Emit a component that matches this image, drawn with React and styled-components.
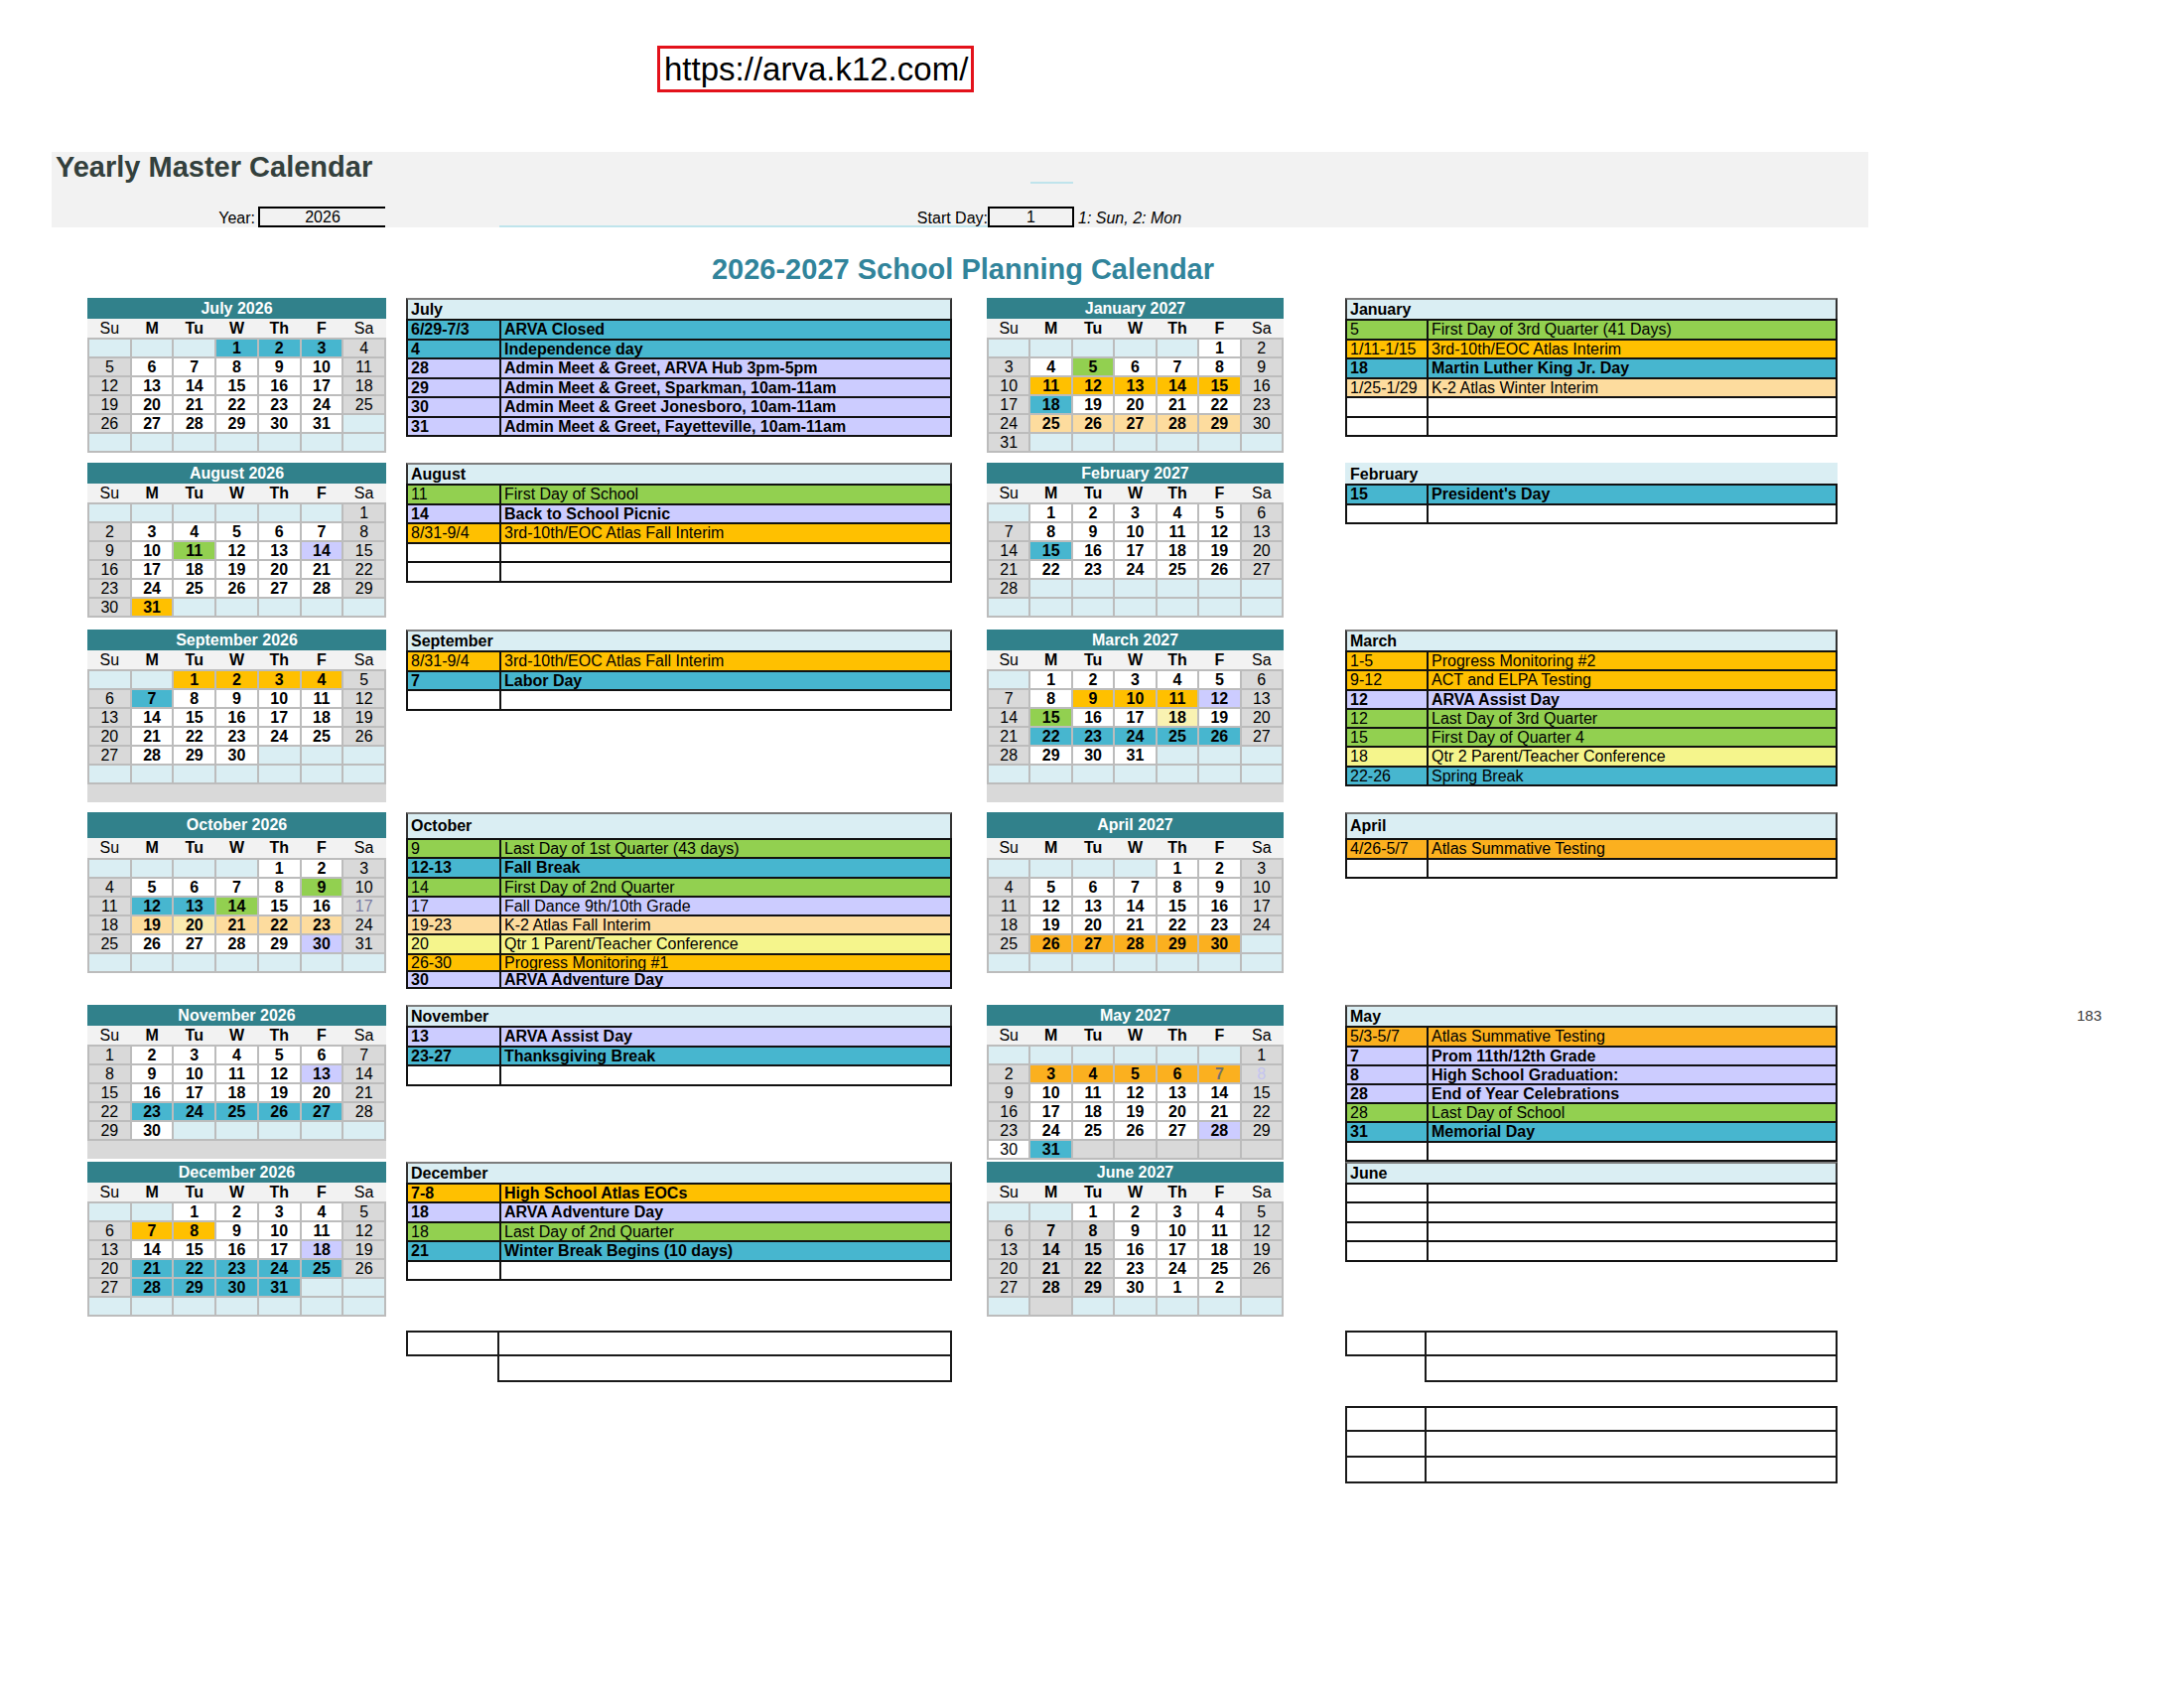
import React from "react";
import styled, { createGlobalStyle } from "styled-components";

const COLORS = {
  cyan: "#47b6cf",
  lav: "#ccccff",
  green: "#92d050",
  orange: "#ffc000",
  amber: "#fbb01f",
  peach: "#fddc9e",
  cream: "#faeab0",
  lemon: "#f9f2b2",
  yellow: "#f5f58c",
  empty: "#daeef3",
  weekend: "#d9d9d9",
  white: "#ffffff",
};

const GlobalStyle = createGlobalStyle`
  * { box-sizing: border-box; }
  body {
    margin: 0;
    background: #ffffff;
    color: #000;
    font-family: "Liberation Sans", Arial, sans-serif;
  }
`;

const Page = styled.div`
  width: 2200px;
  min-height: 1700px;
  padding-top: 46px;
`;

const UrlBox = styled.div`
  margin-left: 662px;
  width: 319px;
  height: 47px;
  border: 3px solid #e3121b;
  padding-left: 4px;
  font-size: 33px;
  line-height: 42px;
  white-space: nowrap;
  overflow: hidden;
`;

const Band = styled.div`
  margin-top: 60px;
  margin-left: 52px;
  width: 1830px;
  height: 76px;
  background: #f2f2f2;
`;

const BandTitle = styled.div`
  padding-left: 4px;
  font-size: 29px;
  line-height: 30px;
  font-weight: bold;
  color: #33403c;
  white-space: nowrap;
`;

const Dash = styled.div`
  margin: 0 0 0 986px;
  width: 43px;
  height: 2px;
  background: #bfe4ec;
`;

const FieldRow = styled.div`
  display: flex;
  margin-top: 23px;
  height: 21px;
  font-size: 16px;
  line-height: 20px;
`;

const FieldLabel = styled.div`
  width: 205px;
  padding-top: 2px;
  text-align: right;
`;

const YearBox = styled.div`
  margin-left: 3px;
  width: 128px;
  border-top: 2px solid #000;
  border-left: 2px solid #000;
  border-bottom: 2px solid #000;
  text-align: center;
  line-height: 18px;
`;

const Underlined = styled.div`
  margin-left: 115px;
  width: 492px;
  padding-top: 2px;
  border-bottom: 2px solid #bfe4ec;
  text-align: right;
`;

const StartBox = styled.div`
  width: 87px;
  border: 2px solid #000;
  text-align: center;
  line-height: 18px;
`;

const Note = styled.div`
  margin-left: 4px;
  padding-top: 2px;
  font-style: italic;
`;

const PlanTitle = styled.h1`
  margin: 26px 0 0;
  width: 1940px;
  text-align: center;
  font-size: 29px;
  line-height: 32px;
  font-weight: bold;
  color: #31849b;
`;

const Sheet = styled.div`
  margin-top: 13px;
  padding-left: 88px;
`;

const Block = styled.div`
  display: flex;
  align-items: flex-start;
  margin-top: ${(p) => p.$gap}px;
`;

const Slot = styled.div`
  flex: none;
  width: ${(p) => p.$w}px;
  margin-left: ${(p) => p.$ml || 0}px;
`;

/* mini calendar */

const CalHead = styled.div`
  height: ${(p) => p.$h}px;
  background: #31818b;
  color: #fff;
  font-size: 16px;
  font-weight: bold;
  text-align: center;
  line-height: ${(p) => p.$h}px;
`;

const DowRow = styled.div`
  display: grid;
  grid-template-columns: repeat(7, 1fr);
  height: ${(p) => p.$h}px;
  padding: 0 2px;
  column-gap: 2px;
  background: #f2f2f2;
`;

const Dow = styled.div`
  text-align: center;
  font-size: 16px;
  line-height: ${(p) => p.$h}px;
  font-weight: ${(p) => (p.$weekend ? 400 : 700)};
`;

const WeekGrid = styled.div`
  display: grid;
  grid-template-columns: repeat(7, 1fr);
  grid-auto-rows: 17px;
  gap: 2px;
  background: #bcbcbc;
  border: 2px solid #bcbcbc;
`;

const Day = styled.div`
  background: ${(p) => p.$bg};
  color: ${(p) => p.$fg};
  font-weight: ${(p) => (p.$bold ? 700 : 400)};
  font-size: 16px;
  line-height: 18px;
  text-align: center;
  overflow: hidden;
`;

const GrayBand = styled.div`
  height: 18px;
  background: #d9d9d9;
`;

/* events list */

const EventHead = styled.div`
  height: ${(p) => p.$h}px;
  background: ${COLORS.empty};
  border: 2px solid ${(p) => (p.$plain ? "transparent" : "#333")};
  border-top-color: ${(p) => (p.$plain ? "transparent" : "#7c7c7c")};
  border-bottom: 0;
  padding-left: 3px;
  font-size: 16px;
  font-weight: bold;
  line-height: ${(p) => p.$h - 2}px;
`;

const EventBody = styled.div`
  border: 2px solid #111;
  border-top: 0;
`;

const EventRow = styled.div`
  display: flex;
  height: ${(p) => p.$h}px;
  border-top: 2px solid #111;
  background: ${(p) => p.$bg};
  font-size: 16px;
  line-height: ${(p) => p.$h - 2}px;
  font-weight: ${(p) => (p.$bold ? 700 : 400)};
  white-space: nowrap;
  overflow: hidden;
`;

const DateCell = styled.div`
  flex: none;
  width: ${(p) => p.$w}px;
  border-right: 2px solid #111;
  padding-left: 3px;
  overflow: hidden;
`;

const DescCell = styled.div`
  flex: 1;
  padding-left: 3px;
  overflow: hidden;
`;

const FootTable = styled.div`
  margin-top: ${(p) => p.$mt || 0}px;
`;

const FootRow = styled.div`
  display: flex;
  height: 26px;
`;

const FootCell = styled.div`
  flex: ${(p) => (p.$w ? "none" : 1)};
  width: ${(p) => (p.$w ? `${p.$w}px` : "auto")};
  border-top: ${(p) => (p.$first ? "2px solid #1a1a1a" : "0")};
  border-bottom: 2px solid #1a1a1a;
  border-right: 2px solid #1a1a1a;
  border-left: ${(p) => (p.$left ? "2px solid #1a1a1a" : "0")};
`;

const FootGap = styled.div`
  flex: none;
  width: ${(p) => p.$w}px;
`;

const PageNum = styled.div`
  flex: none;
  margin: 3px 0 0 241px;
  font-size: 15px;
  line-height: 15px;
  color: #3a3a3a;
`;

const range = (a, b, color) => {
  const out = {};
  for (let d = a; d <= b; d++) out[d] = color;
  return out;
};

const LEFT_CALS = [
  { title: "July 2026", offset: 3, days: 31, hl: range(1, 3, "cyan") },
  { title: "August 2026", offset: 6, days: 31, hl: { 11: "green", 14: "lav", 31: "orange" } },
  { title: "September 2026", offset: 2, days: 30, band: true, hl: { ...range(1, 4, "orange"), 7: "cyan" } },
  {
    title: "October 2026",
    offset: 4,
    days: 31,
    hl: { 9: "green", 12: "cyan", 13: "cyan", 14: "green", 19: "peach", 20: "cream", 21: "peach", 22: "peach", 23: "peach", 30: "lav" },
    fg: { 17: "#7a7aa0" },
  },
  { title: "November 2026", offset: 0, days: 30, rows: 5, band: true, hl: { 13: "lav", ...range(23, 27, "cyan") } },
  {
    title: "December 2026",
    offset: 2,
    days: 31,
    hl: { 7: "orange", 8: "orange", 18: "lav", ...range(21, 25, "cyan"), ...range(28, 31, "cyan") },
  },
];

const RIGHT_CALS = [
  {
    title: "January 2027",
    offset: 5,
    days: 31,
    hl: { 5: "green", ...range(11, 15, "orange"), 18: "cyan", ...range(25, 29, "peach") },
  },
  { title: "February 2027", offset: 1, days: 28, hl: { 15: "cyan" } },
  {
    title: "March 2027",
    offset: 1,
    days: 31,
    band: true,
    hl: { ...range(9, 11, "orange"), 12: "lav", 15: "green", 18: "lemon", ...range(22, 26, "cyan") },
  },
  { title: "April 2027", offset: 4, days: 30, hl: range(26, 30, "amber") },
  {
    title: "May 2027",
    offset: 6,
    days: 31,
    trailGray: true,
    hl: { ...range(3, 7, "amber"), 28: "lav", 30: "white", 31: "cyan" },
    fg: { 7: "#707070", 8: "#c4c4f0" },
  },
  {
    title: "June 2027",
    offset: 2,
    days: 30,
    next: 2,
    trailGray: true,
    grayCells: [36],
    hl: { 7: "weekend", 8: "weekend", 14: "weekend", 15: "weekend", 21: "weekend", 22: "weekend", 28: "weekend", 29: "weekend" },
  },
];

const ev = (d, t, c, b = false, h) => ({ d, t, c, b, h });

const LEFT_EVENTS = [
  {
    name: "July",
    rows: [
      ev("6/29-7/3", "ARVA Closed", "cyan", true),
      ev("4", "Independence day", "cyan", true),
      ev("28", "Admin Meet & Greet, ARVA Hub 3pm-5pm", "lav", true),
      ev("29", "Admin Meet & Greet, Sparkman, 10am-11am", "lav", true),
      ev("30", "Admin Meet & Greet Jonesboro, 10am-11am", "lav", true),
      ev("31", "Admin Meet & Greet, Fayetteville, 10am-11am", "lav", true),
    ],
  },
  {
    name: "August",
    blank: 2,
    rows: [
      ev("11", "First Day of School", "green"),
      ev("14", "Back to School Picnic", "lav", true),
      ev("8/31-9/4", "3rd-10th/EOC Atlas Fall Interim", "orange"),
    ],
  },
  {
    name: "September",
    blank: 1,
    rows: [ev("8/31-9/4", "3rd-10th/EOC Atlas Fall Interim", "orange"), ev("7", "Labor Day", "cyan", true)],
  },
  {
    name: "October",
    rowH: 19.3,
    rows: [
      ev("9", "Last Day of 1st Quarter (43 days)", "green"),
      ev("12-13", "Fall Break", "cyan", true),
      ev("14", "First Day of 2nd Quarter", "green"),
      ev("17", "Fall Dance 9th/10th Grade", "lav"),
      ev("19-23", "K-2 Atlas Fall Interim", "peach"),
      ev("20", "Qtr 1 Parent/Teacher Conference", "yellow"),
      ev("26-30", "Progress Monitoring #1", "orange", false, 17.3),
      ev("30", "ARVA Adventure Day", "lav", true, 17.3),
    ],
  },
  {
    name: "November",
    blank: 1,
    rows: [ev("13", "ARVA Assist Day", "lav", true), ev("23-27", "Thanksgiving Break", "cyan", true)],
  },
  {
    name: "December",
    blank: 1,
    rows: [
      ev("7-8", "High School Atlas EOCs", "orange", true),
      ev("18", "ARVA Adventure Day", "lav", true),
      ev("18", "Last Day of 2nd Quarter", "green"),
      ev("21", "Winter Break Begins (10 days)", "cyan", true),
    ],
  },
];

const RIGHT_EVENTS = [
  {
    name: "January",
    blank: 2,
    rows: [
      ev("5", "First Day of 3rd Quarter (41 Days)", "green"),
      ev("1/11-1/15", "3rd-10th/EOC Atlas Interim", "orange"),
      ev("18", "Martin Luther King Jr. Day", "cyan", true),
      ev("1/25-1/29", "K-2 Atlas Winter Interim", "peach"),
    ],
  },
  { name: "February", plain: true, blank: 1, rows: [ev("15", "President's Day", "cyan", true)] },
  {
    name: "March",
    rowH: 19.3,
    rows: [
      ev("1-5", "Progress Monitoring #2", "orange"),
      ev("9-12", "ACT and ELPA Testing", "orange"),
      ev("12", "ARVA Assist Day", "lav", true),
      ev("12", "Last Day of 3rd Quarter", "green"),
      ev("15", "First Day of Quarter 4", "green"),
      ev("18", "Qtr 2 Parent/Teacher Conference", "yellow"),
      ev("22-26", "Spring Break", "cyan"),
    ],
  },
  { name: "April", blank: 1, rows: [ev("4/26-5/7", "Atlas Summative Testing", "amber")] },
  {
    name: "May",
    blank: 1,
    rowH: 19.2,
    rows: [
      ev("5/3-5/7", "Atlas Summative Testing", "amber"),
      ev("7", "Prom 11th/12th Grade", "lav", true),
      ev("8", "High School Graduation:", "lav", true),
      ev("28", "End of Year Celebrations", "lav", true),
      ev("28", "Last Day of School", "green"),
      ev("31", "Memorial Day", "cyan", true),
    ],
  },
  { name: "June", blank: 4, rows: [] },
];

const DOW = ["Su", "M", "Tu", "W", "Th", "F", "Sa"];

function buildCells(m) {
  const rows = m.rows || 6;
  const lastRow = Math.floor((m.offset + m.days - 1) / 7);
  const cells = [];
  for (let i = 0; i < rows * 7; i++) {
    const col = i % 7;
    const row = Math.floor(i / 7);
    const day = i - m.offset + 1;
    const weekend = col === 0 || col === 6;
    const cell = { text: "", bg: COLORS.empty, fg: "#000", bold: false };
    if (day >= 1 && day <= m.days) {
      cell.text = day;
      cell.bold = !weekend;
      cell.bg = weekend ? COLORS.weekend : COLORS.white;
      if (m.hl && m.hl[day]) cell.bg = COLORS[m.hl[day]];
      if (m.fg && m.fg[day]) cell.fg = m.fg[day];
    } else if (day > m.days) {
      const extra = day - m.days;
      if (m.next && extra <= m.next) {
        cell.text = extra;
        cell.bold = !weekend;
        cell.bg = weekend ? COLORS.weekend : COLORS.white;
      } else if (m.trailGray && row === lastRow) {
        cell.bg = COLORS.weekend;
      }
    }
    if (m.grayCells && m.grayCells.includes(i)) cell.bg = COLORS.weekend;
    cells.push(cell);
  }
  return cells;
}

const MiniCal = ({ month, tall }) => (
  <div>
    <CalHead $h={tall ? 26 : 21}>{month.title}</CalHead>
    <DowRow $h={tall ? 20 : 19}>
      {DOW.map((d, i) => (
        <Dow key={d} $h={tall ? 20 : 19} $weekend={i === 0 || i === 6}>
          {d}
        </Dow>
      ))}
    </DowRow>
    <WeekGrid>
      {buildCells(month).map((c, i) => (
        <Day key={i} $bg={c.bg} $fg={c.fg} $bold={c.bold}>
          {c.text}
        </Day>
      ))}
    </WeekGrid>
    {month.band && <GrayBand />}
  </div>
);

const EventList = ({ list, dateW, tall }) => {
  const h = list.rowH || 19.5;
  const blanks = Array.from({ length: list.blank || 0 });
  return (
    <div>
      <EventHead $h={tall ? 26 : 21} $plain={list.plain}>
        {list.name}
      </EventHead>
      <EventBody>
        {list.rows.map((r, i) => (
          <EventRow key={i} $h={r.h || h} $bg={COLORS[r.c]} $bold={r.b}>
            <DateCell $w={dateW}>{r.d}</DateCell>
            <DescCell>{r.t}</DescCell>
          </EventRow>
        ))}
        {blanks.map((_, i) => (
          <EventRow key={`b${i}`} $h={h} $bg="#fff">
            <DateCell $w={dateW} />
            <DescCell />
          </EventRow>
        ))}
      </EventBody>
    </div>
  );
};

const NotesTable = ({ dateW, rows, openLast, mt }) => (
  <FootTable $mt={mt}>
    {Array.from({ length: rows }).map((_, i) =>
      openLast && i === rows - 1 ? (
        <FootRow key={i}>
          <FootGap $w={dateW} />
          <FootCell $left />
        </FootRow>
      ) : (
        <FootRow key={i}>
          <FootCell $w={dateW + 2} $left $first={i === 0} />
          <FootCell $first={i === 0} />
        </FootRow>
      )
    )}
  </FootTable>
);

const GAPS = [0, 10, 12, 10, 16, 0];

const COLS = {
  leftCal: { w: 301, ml: 0 },
  leftEv: { w: 550, ml: 20, date: 94 },
  rightCal: { w: 299, ml: 35 },
  rightEv: { w: 496, ml: 62, date: 82 },
};

export default function App() {
  return (
    <Page>
      <GlobalStyle />
      <UrlBox>https://arva.k12.com/</UrlBox>
      <Band>
        <BandTitle>Yearly Master Calendar</BandTitle>
        <Dash />
        <FieldRow>
          <FieldLabel>Year:</FieldLabel>
          <YearBox>2026</YearBox>
          <Underlined>Start Day:</Underlined>
          <StartBox>1</StartBox>
          <Note>1: Sun, 2: Mon</Note>
        </FieldRow>
      </Band>
      <PlanTitle>2026-2027 School Planning Calendar</PlanTitle>
      <Sheet>
        {GAPS.map((gap, i) => {
          const tall = i === 3;
          return (
            <Block key={i} $gap={gap}>
              <Slot $w={COLS.leftCal.w}>
                <MiniCal month={LEFT_CALS[i]} tall={tall} />
              </Slot>
              <Slot $w={COLS.leftEv.w} $ml={COLS.leftEv.ml}>
                <EventList list={LEFT_EVENTS[i]} dateW={COLS.leftEv.date} tall={tall} />
              </Slot>
              <Slot $w={COLS.rightCal.w} $ml={COLS.rightCal.ml}>
                <MiniCal month={RIGHT_CALS[i]} tall={tall} />
              </Slot>
              <Slot $w={COLS.rightEv.w} $ml={COLS.rightEv.ml}>
                <EventList list={RIGHT_EVENTS[i]} dateW={COLS.rightEv.date} tall={tall} />
              </Slot>
              {i === 4 && <PageNum>183</PageNum>}
            </Block>
          );
        })}
        <Block $gap={14}>
          <Slot $w={COLS.leftEv.w} $ml={COLS.leftCal.w + COLS.leftEv.ml}>
            <NotesTable dateW={COLS.leftEv.date - 2} rows={2} openLast />
          </Slot>
          <Slot $w={COLS.rightEv.w} $ml={COLS.rightCal.ml + COLS.rightCal.w + COLS.rightEv.ml}>
            <NotesTable dateW={COLS.rightEv.date - 2} rows={2} openLast />
            <NotesTable dateW={COLS.rightEv.date - 2} rows={3} mt={24} />
          </Slot>
        </Block>
      </Sheet>
    </Page>
  );
}
